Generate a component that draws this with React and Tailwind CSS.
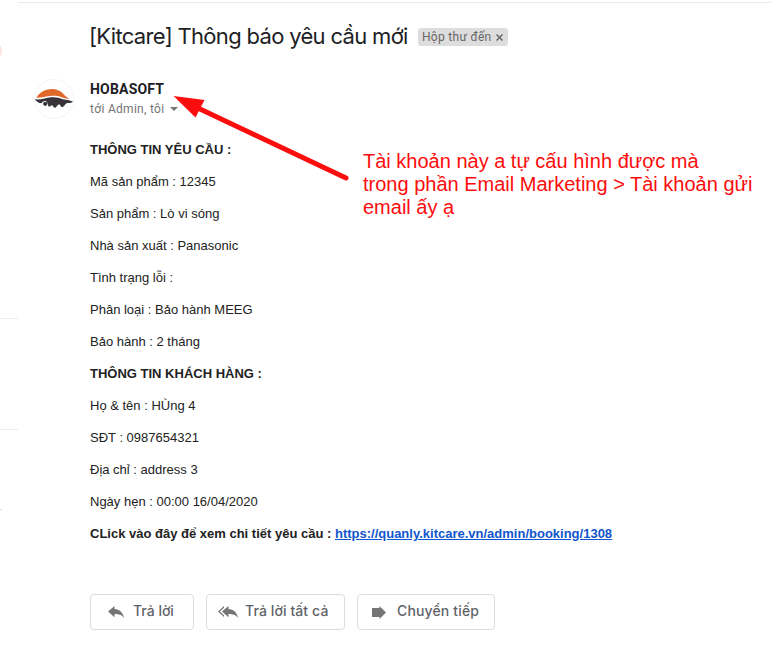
const details = [
  { text: 'THÔNG TIN YÊU CẦU :', bold: true },
  { text: 'Mã sản phẩm : 12345' },
  { text: 'Sản phẩm : Lò vi sóng' },
  { text: 'Nhà sản xuất : Panasonic' },
  { text: 'Tình trạng lỗi :' },
  { text: 'Phân loại : Bảo hành MEEG' },
  { text: 'Bảo hành : 2 tháng' },
  { text: 'THÔNG TIN KHÁCH HÀNG :', bold: true },
  { text: 'Họ & tên : HÙng 4' },
  { text: 'SĐT : 0987654321' },
  { text: 'Địa chỉ : address 3' },
  { text: 'Ngày hẹn : 00:00 16/04/2020' },
];

function Sidebar() {
  return (
    <aside className="relative w-[18px] shrink-0 overflow-hidden">
      <div className="h-[319px] border-b border-[#ececec]" />
      <div className="h-[111px] border-b border-[#ececec]" />
      <div className="h-[80px] w-[2px] border-b border-[#dedede]" />
      <div className="absolute top-[41px] left-[-18px] h-5 w-5 rounded-full bg-[#fce3e1]" />
    </aside>
  );
}

function Avatar() {
  return (
    <svg className="h-10 w-10" viewBox="0 0 40 40">
      <circle cx="20" cy="20" r="19.5" fill="#fff" stroke="#ebebeb" strokeWidth="0.8" strokeDasharray="2 0.7" />
      <path d="M2.500 18.700C5 13.500 11 10 17.500 10c5.500 0 9.500 2 12 5 1.700 2 3.500 3.500 6 4.800-5 0-8-2-12-2.800C16 15.600 10 18.600 2.500 18.700Z" fill="#e0682b" />
      <path d="M.8 20.300C7 21 12 18.700 17 18.200c6.500-.5 10.500 1.800 15 2.600 2.500.5 5 .9 7 1.700-1.500 1.200-3 1.600-4.800 1.500-1.500 0-2.500.6-3.200 1.800-.7 1.100-1.500 2-3 2.500-1.800-.6-1.600-2.800-2.800-3-1.500 0-2.500 3-4.200 3.700-1.600-.5-2-2.500-3-2.700-1.500.2-1.600 1.500-2.800 1.500-1.600-.3-1-5.300-4-5.700-2.500-.1-3 1.800-3.800 2.100-2.300 0-4.600-1.400-6.600-3.900Z" fill="#38343a" />
      <circle cx="11.200" cy="24.800" r="2.100" fill="#38343a" />
    </svg>
  );
}

function ReplyIcon() {
  return (
    <svg className="h-3 w-4" viewBox="0 0 16 12" fill="#757575">
      <path d="M6.500 0v3C11.500 3.300 15 6.500 16 12c-2.200-3.200-5-4-9.500-4v3.200L0 5.500Z" />
    </svg>
  );
}

function ReplyAllIcon() {
  return (
    <svg className="h-3 w-5" viewBox="0 0 20 12" fill="#757575">
      <path d="M10.500 0v3C15.500 3.300 19 6.500 20 12c-2.200-3.200-5-4-9.500-4v3.200L4 5.500Z" />
      <path d="M6 0v1.800L1.900 5.500 6 9.200V11L0 5.500Z" />
    </svg>
  );
}

function ForwardIcon() {
  return (
    <svg className="h-[13px] w-[14px]" viewBox="0 0 14 13" fill="#757575">
      <path d="M0 2h7.500V0L14 6.500 7.500 13v-2H0Z" />
    </svg>
  );
}

function ActionButton({ className, icon, labelClass, children }) {
  return (
    <button className={`flex h-9 items-center rounded-[4px] border border-[#dadce0] bg-white text-[#5f6368] ${className}`}>
      <span className="flex shrink-0">{icon}</span>
      <span className={`-mt-[3px] font-['Inter','Noto_Sans',sans-serif] text-[14px] font-medium whitespace-nowrap ${labelClass}`}>{children}</span>
    </button>
  );
}

export default function App() {
  return (
    <div className="relative flex h-[660px] w-[772px] overflow-hidden bg-white text-[#222]">
      <Sidebar />
      <main className="flex-1 pt-[2px]">
        <div className="h-px bg-[#ebebeb]" />
        <header className="flex h-[66px] items-center pl-[72px]">
          <h1 className="-ml-px w-[329px] font-['Inter','Noto_Sans',sans-serif] text-[22px] leading-7 tracking-[-0.68px] whitespace-nowrap text-[#202124]">
            [Kitcare] Thông báo yêu cầu mới
          </h1>
          <div className="mt-[2px] flex h-[18px] w-[90px] items-center justify-between rounded-[3px] bg-[#ddd] pr-[5px] pl-1 font-['Roboto',sans-serif] text-xs text-[#666]">
            <span className="tracking-[0.3px] whitespace-nowrap">Hộp thư đến</span>
            <svg className="h-[7px] w-[7px]" viewBox="0 0 7 7" stroke="#666" strokeWidth="1.500">
              <path d="M.5.5l6 6m0-6l-6 6" />
            </svg>
          </div>
        </header>

        <section className="flex h-[65px] pt-[10px] pl-4 font-['Roboto',sans-serif]">
          <Avatar />
          <div className="pl-4">
            <div className="h-5 text-sm leading-5 font-bold tracking-[0.2px] text-[#202124]">HOBASOFT</div>
            <div className="flex h-5 items-center text-xs tracking-[0.3px] text-[#757575]">
              tới Admin, tôi
              <svg className="ml-[6px] h-1 w-2" viewBox="0 0 8 4" fill="#757575">
                <path d="M0 0h8L4 4Z" />
              </svg>
            </div>
          </div>
        </section>

        <article className="pl-[72px] font-['Liberation_Sans',Arial,sans-serif] text-[13px]">
          {details.map((line) => (
            <p key={line.text} className={`h-8 leading-8 ${line.bold ? 'font-bold' : ''}`}>
              {line.text}
            </p>
          ))}
          <p className="h-8 leading-8 font-bold">
            CLick vào đây để xem chi tiết yêu cầu :{' '}
            <a className="text-[#1155cc] underline">https://quanly.kitcare.vn/admin/booking/1308</a>
          </p>
        </article>

        <footer className="flex gap-3 pt-[44px] pl-[72px]">
          <ActionButton className="w-[104px] pl-[17px]" icon={<ReplyIcon />} labelClass="pl-[9px]">Trả lời</ActionButton>
          <ActionButton className="w-[139px] pl-[11px]" icon={<ReplyAllIcon />} labelClass="pl-[7px] tracking-[0.1px]">Trả lời tất cả</ActionButton>
          <ActionButton className="w-[138px] pl-[14px]" icon={<ForwardIcon />} labelClass="pl-[11px] tracking-[0.15px]">Chuyển tiếp</ActionButton>
        </footer>
      </main>

      <svg className="absolute top-[90px] left-[170px] h-[95px] w-[185px]" viewBox="170 90 185 95">
        <path d="M200 109L346 178" stroke="#fc0d0d" strokeWidth="5" strokeLinecap="round" />
        <path d="M173.500 96L204.500 100 195.500 117.500Z" fill="#fc0d0d" />
      </svg>
      <p className="absolute top-[150px] left-[363px] font-['Liberation_Sans',Arial,sans-serif] text-[20px] leading-[23px] whitespace-nowrap text-[#fc0d0d]">
        Tài khoản này a tự cấu hình được mà<br />
        trong phần Email Marketing &gt; Tài khoản gửi<br />
        email ấy ạ
      </p>
    </div>
  );
}
